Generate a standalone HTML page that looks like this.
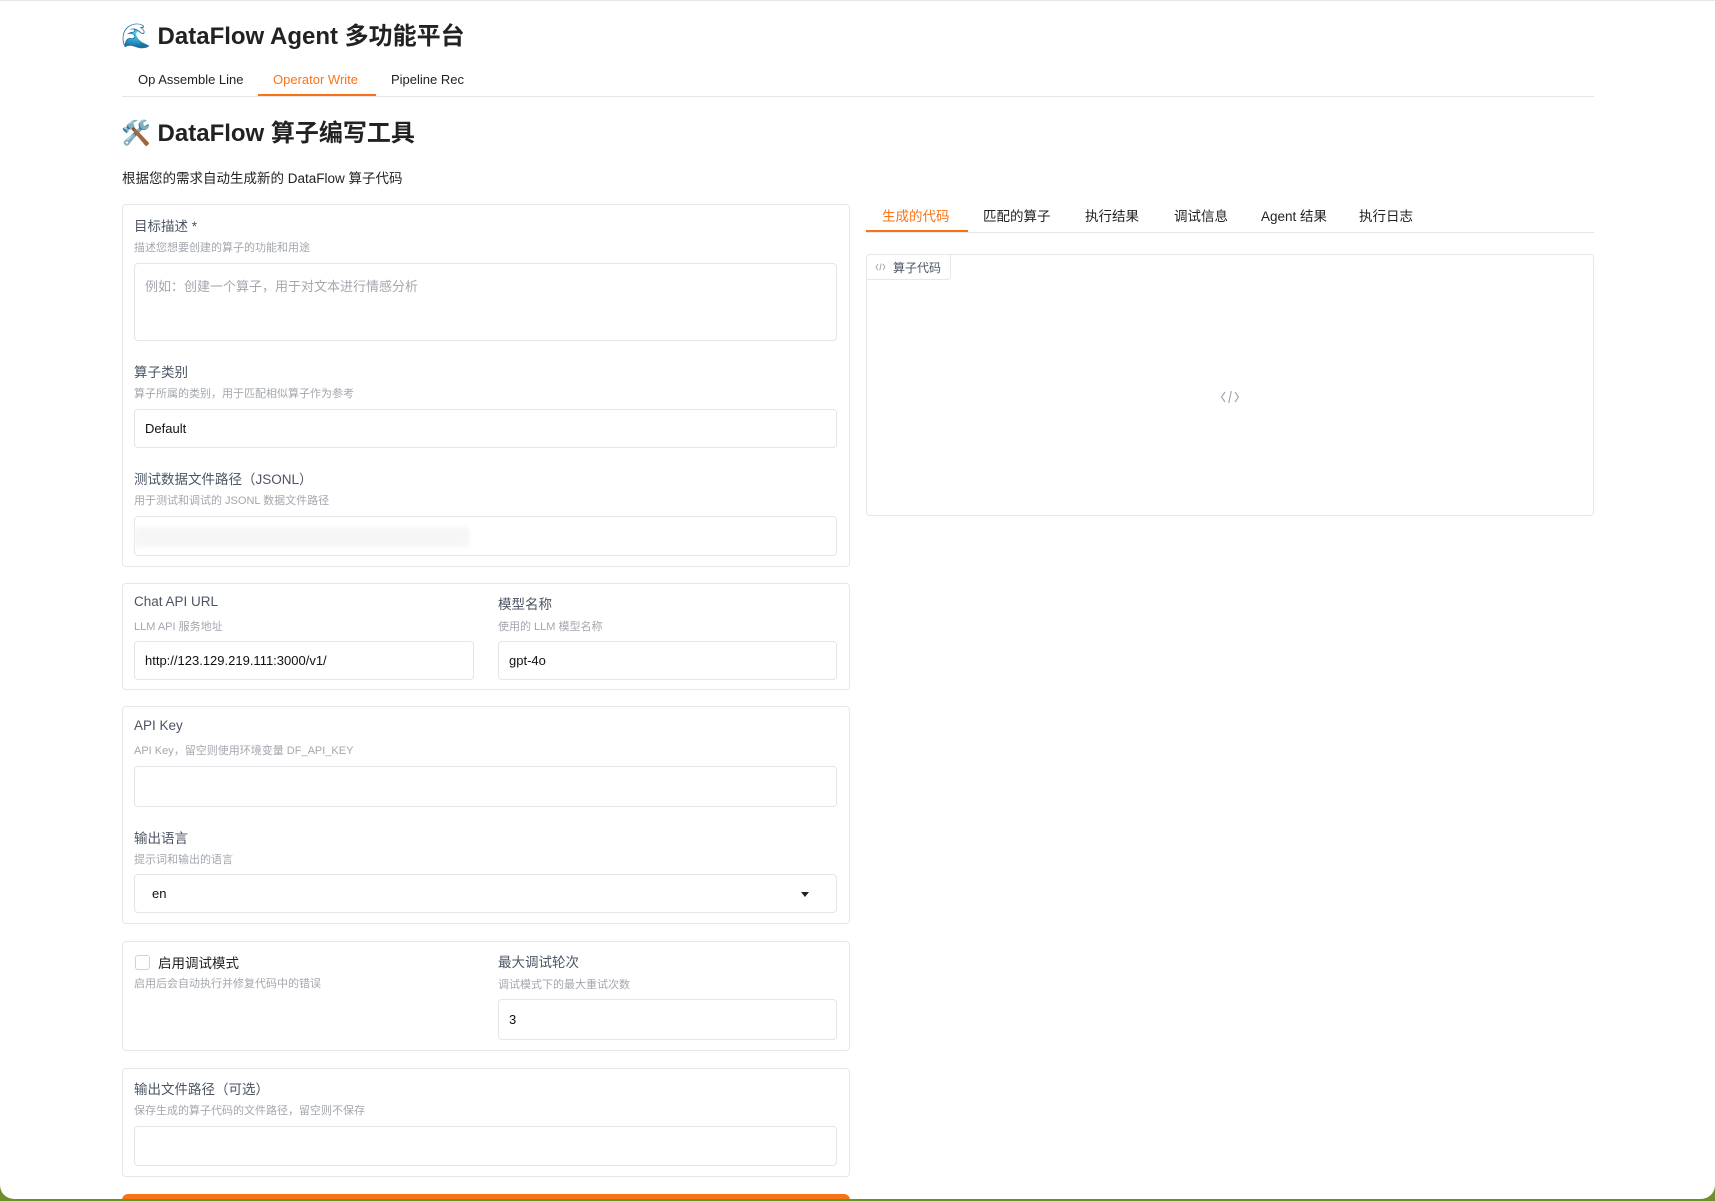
<!DOCTYPE html>
<html><head><meta charset="utf-8">
<style>
*{box-sizing:border-box;margin:0;padding:0}
html,body{width:1715px;height:1201px;overflow:hidden}
body{background:#6f8d2c;font-family:"Liberation Sans","Noto Sans CJK SC",sans-serif;color:#1f2937;position:relative}
#win{position:absolute;left:0;top:0;width:1715px;height:1199px;background:#fff;border-radius:0 0 14px 14px;border-top:1px solid #e5e7eb;overflow:hidden}
.a{position:absolute;white-space:nowrap}
.panel{position:absolute;border:1px solid #e5e7eb;border-radius:4px;background:#fff}
.inp{position:absolute;border:1px solid #e3e5e8;border-radius:4px;background:#fff;font-size:13px;color:#111;padding-left:10px;display:flex;align-items:center}
.lbl{font-size:13.5px;color:#4b5563}
.info{font-size:11px;color:#a3a7ae}
.tab{font-size:13.5px;color:#222}
</style></head><body>
<div id="win">
<div class="a" style="left:121px;top:15px;font-size:24px;font-weight:bold;color:#222">🌊 DataFlow Agent 多功能平台</div>
<div class="a tab" style="left:138px;top:71px;font-size:13px">Op Assemble Line</div>
<div class="a tab" style="left:273px;top:71px;font-size:13px;color:#f97316">Operator Write</div>
<div class="a tab" style="left:391px;top:71px;font-size:13px">Pipeline Rec</div>
<div class="a" style="left:122px;top:95px;width:1472px;height:1px;background:#e5e7eb"></div>
<div class="a" style="left:258px;top:93px;width:118px;height:2px;background:#f97316"></div>

<div class="a" style="left:121px;top:112px;font-size:24px;font-weight:bold;color:#222">🛠️ DataFlow 算子编写工具</div>
<div class="a" style="left:122px;top:166px;font-size:13.5px;color:#222">根据您的需求自动生成新的 DataFlow 算子代码</div>

<!-- panel 1 -->
<div class="panel" style="left:122px;top:203px;width:728px;height:363px"></div>
<div class="a lbl" style="left:134px;top:214px">目标描述 *</div>
<div class="a info" style="left:134px;top:238px">描述您想要创建的算子的功能和用途</div>
<div class="inp" style="left:134px;top:262px;width:703px;height:78px;align-items:flex-start;padding-top:12px;color:#a3a7ae">例如：创建一个算子，用于对文本进行情感分析</div>
<div class="a lbl" style="left:134px;top:360px">算子类别</div>
<div class="a info" style="left:134px;top:384px">算子所属的类别，用于匹配相似算子作为参考</div>
<div class="inp" style="left:134px;top:408px;width:703px;height:39px">Default</div>
<div class="a lbl" style="left:134px;top:467px">测试数据文件路径（JSONL）</div>
<div class="a info" style="left:134px;top:491px">用于测试和调试的 JSONL 数据文件路径</div>
<div class="inp" style="left:134px;top:515px;width:703px;height:40px"></div>
<div class="a" style="left:134px;top:526px;width:336px;height:20px;background:#f6f6f6;border-radius:6px;filter:blur(2px)"></div>

<!-- panel 2 -->
<div class="panel" style="left:122px;top:582px;width:728px;height:107px"></div>
<div class="a lbl" style="left:134px;top:593px">Chat API URL</div>
<div class="a info" style="left:134px;top:617px">LLM API 服务地址</div>
<div class="inp" style="left:134px;top:640px;width:340px;height:39px">http://123.129.219.111:3000/v1/</div>
<div class="a lbl" style="left:498px;top:592px">模型名称</div>
<div class="a info" style="left:498px;top:617px">使用的 LLM 模型名称</div>
<div class="inp" style="left:498px;top:640px;width:339px;height:39px">gpt-4o</div>

<!-- panel 3 -->
<div class="panel" style="left:122px;top:705px;width:728px;height:218px"></div>
<div class="a lbl" style="left:134px;top:717px">API Key</div>
<div class="a info" style="left:134px;top:741px">API Key，留空则使用环境变量 DF_API_KEY</div>
<div class="inp" style="left:134px;top:765px;width:703px;height:41px"></div>
<div class="a lbl" style="left:134px;top:826px">输出语言</div>
<div class="a info" style="left:134px;top:850px">提示词和输出的语言</div>
<div class="inp" style="left:134px;top:873px;width:703px;height:39px;padding-left:17px">en</div>
<div class="a" style="left:801px;top:891px;width:0;height:0;border-left:4.5px solid transparent;border-right:4.5px solid transparent;border-top:5px solid #222"></div>

<!-- panel 4 -->
<div class="panel" style="left:122px;top:940px;width:728px;height:110px"></div>
<div class="a" style="left:135px;top:954px;width:15px;height:15px;border:1px solid #cfd3d8;border-radius:3px"></div>
<div class="a" style="left:158px;top:951px;font-size:13.5px;color:#222">启用调试模式</div>
<div class="a info" style="left:134px;top:974px">启用后会自动执行并修复代码中的错误</div>
<div class="a lbl" style="left:498px;top:950px">最大调试轮次</div>
<div class="a info" style="left:498px;top:975px">调试模式下的最大重试次数</div>
<div class="inp" style="left:498px;top:998px;width:339px;height:41px">3</div>

<!-- panel 5 -->
<div class="panel" style="left:122px;top:1067px;width:728px;height:109px"></div>
<div class="a lbl" style="left:134px;top:1077px">输出文件路径（可选）</div>
<div class="a info" style="left:134px;top:1101px">保存生成的算子代码的文件路径，留空则不保存</div>
<div class="inp" style="left:134px;top:1125px;width:703px;height:40px"></div>

<div class="a" style="left:122px;top:1193px;width:728px;height:20px;background:#f97316;border-radius:6px"></div>

<!-- right column -->
<div class="a" style="left:866px;top:231px;width:728px;height:1px;background:#e5e7eb"></div>
<div class="a" style="left:866px;top:229px;width:102px;height:2px;background:#f97316"></div>
<div class="a tab" style="left:882px;top:204px;color:#f97316">生成的代码</div>
<div class="a tab" style="left:983px;top:204px">匹配的算子</div>
<div class="a tab" style="left:1085px;top:204px">执行结果</div>
<div class="a tab" style="left:1174px;top:204px">调试信息</div>
<div class="a tab" style="left:1261px;top:204px">Agent 结果</div>
<div class="a tab" style="left:1359px;top:204px">执行日志</div>

<div class="panel" style="left:866px;top:253px;width:728px;height:262px"></div>
<div class="a" style="left:866px;top:253px;width:85px;height:26px;border:1px solid #e5e7eb;border-radius:4px 0 4px 0;background:#fff"></div>
<svg class="a" style="left:875px;top:262px" width="11" height="8" viewBox="0 0 11 8"><path d="M3 1L1 4L3 7M8 1L10 4L8 7M6.3 0.5L4.7 7.5" fill="none" stroke="#9ca3af" stroke-width="0.9"/></svg>
<div class="a" style="left:893px;top:258px;font-size:12px;color:#4b5563">算子代码</div>
<svg class="a" style="left:1220px;top:389px" width="20" height="14" viewBox="0 0 20 14"><path d="M5 2L1.5 7L5 12M15 2L18.5 7L15 12M11.3 1L8.7 13" fill="none" stroke="#9ca3af" stroke-width="1.1"/></svg>
</div>
</body></html>
